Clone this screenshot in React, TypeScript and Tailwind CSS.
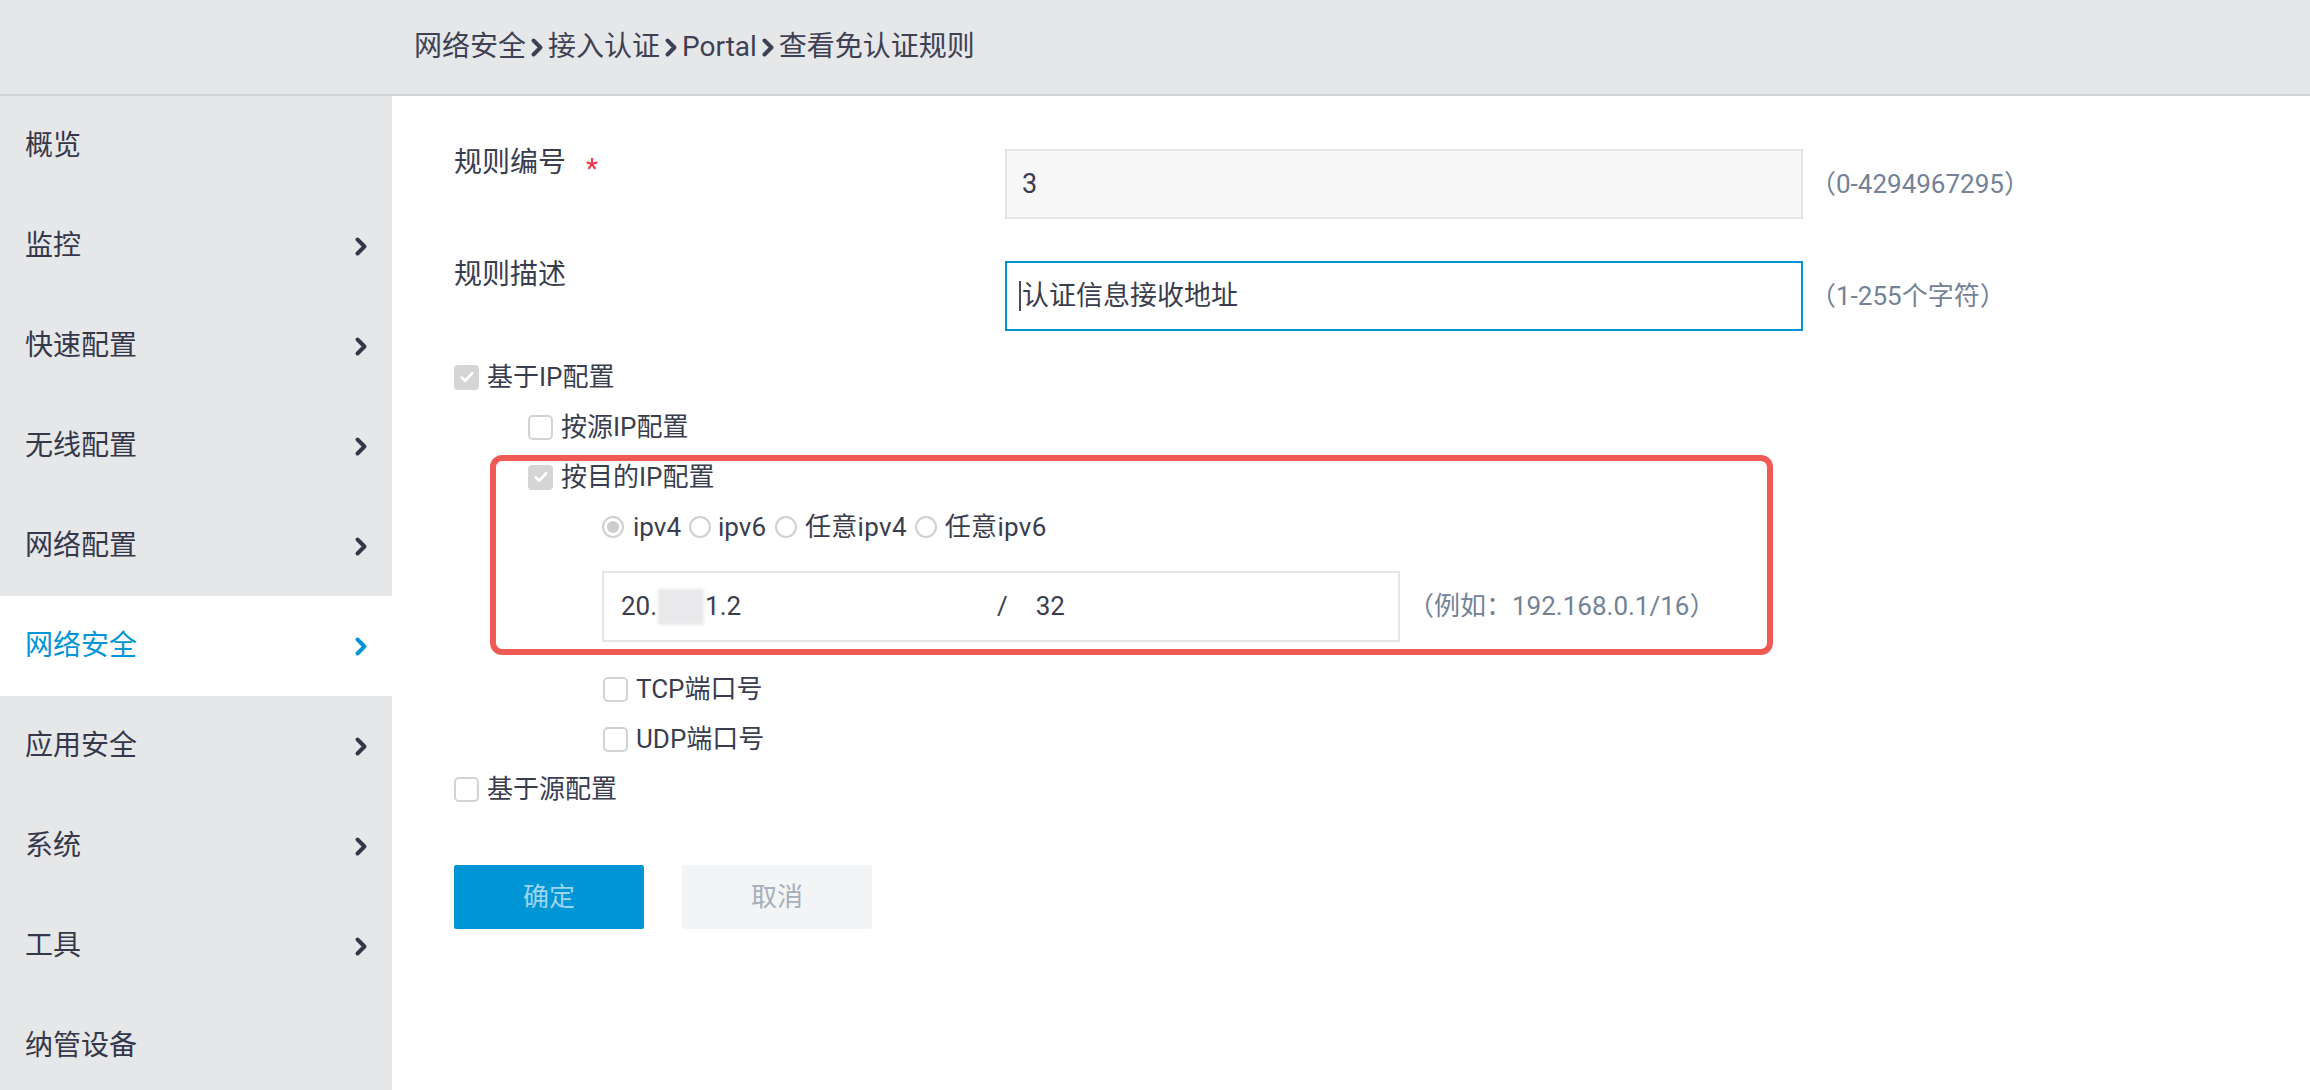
import React from "react";

const menu = [
  { name: "概览", arrow: false },
  { name: "监控", arrow: true },
  { name: "快速配置", arrow: true },
  { name: "无线配置", arrow: true },
  { name: "网络配置", arrow: true },
  { name: "网络安全", arrow: true, active: true },
  { name: "应用安全", arrow: true },
  { name: "系统", arrow: true },
  { name: "工具", arrow: true },
  { name: "纳管设备", arrow: false },
];

const Chevron = ({ className }: { className?: string }) => (
  <svg
    viewBox="0 0 14 21"
    className={className}
    fill="none"
    stroke="currentColor"
    strokeWidth={4}
    strokeLinecap="round"
    strokeLinejoin="round"
  >
    <path d="M3.5 3.5l7 7-7 7" />
  </svg>
);

const Checkbox = ({ checked }: { checked?: boolean }) =>
  checked ? (
    <span className="flex h-[25px] w-[25px] shrink-0 items-center justify-center rounded-[4px] bg-[#d5d5d5]">
      <svg viewBox="0 0 24 24" className="h-[18px] w-[18px]" fill="none" stroke="#ffffff" strokeWidth={3.5} strokeLinecap="round" strokeLinejoin="round">
        <path d="M5 12.5l4.5 4.5L19 7" />
      </svg>
    </span>
  ) : (
    <span className="h-[25px] w-[25px] shrink-0 rounded-[5px] border-2 border-[#d3d3d3] bg-white" />
  );

const Radio = ({ checked }: { checked?: boolean }) => (
  <span className="flex h-[22px] w-[22px] shrink-0 items-center justify-center rounded-full border-2 border-[#d0d0d0] bg-white">
    {checked && <span className="h-[12px] w-[12px] rounded-full bg-[#cdcdcd]" />}
  </span>
);

const CheckRow = ({ label, checked, indent }: { label: string; checked?: boolean; indent: string }) => (
  <div className={`flex h-[50px] items-center gap-[8px] ${indent}`}>
    <Checkbox checked={checked} />
    <span className="text-[26px]">{label}</span>
  </div>
);

export default function App() {
  return (
    <div className="flex h-[1090px] w-[2310px] flex-col overflow-hidden bg-white font-['Roboto','Noto_Sans_CJK_SC',sans-serif] text-[#3a3d4e]">
      {/* top breadcrumb bar */}
      <div className="flex h-[96px] shrink-0 items-center border-b-2 border-[#d3d4d6] bg-[#e6e7e9] pl-[414px] text-[28px] text-[#3e4154]">
        <span>网络安全</span>
        <Chevron className="mx-[4px] h-[21px] w-[14px]" />
        <span>接入认证</span>
        <Chevron className="mx-[4px] h-[21px] w-[14px]" />
        <span>Portal</span>
        <Chevron className="mx-[4px] h-[21px] w-[14px]" />
        <span>查看免认证规则</span>
      </div>

      <div className="flex flex-1">
        {/* side menu */}
        <div className="w-[392px] shrink-0 bg-[#e6e7e9]">
          {menu.map((item) => (
            <div
              key={item.name}
              className={
                item.active
                  ? "flex h-[100px] items-center justify-between bg-white pl-[25px] pr-[24px] text-[28px] text-[#0096d6]"
                  : "flex h-[100px] items-center justify-between pl-[25px] pr-[24px] text-[28px] text-[#35384a]"
              }
            >
              <span>{item.name}</span>
              {item.arrow && <Chevron className="h-[21px] w-[14px]" />}
            </div>
          ))}
        </div>

        {/* form */}
        <div className="flex-1 pl-[62px] pt-[53px]">
          <div className="flex items-start">
            <div className="flex w-[551px] items-start text-[28px] leading-[28px]">
              <span>规则编号</span>
              <span className="ml-[20px] mt-[6px] text-[#e8334a]">*</span>
            </div>
            <div className="flex items-center">
              <div className="flex h-[70px] w-[798px] items-center border-2 border-[#e3e5e7] bg-[#f7f7f7] pl-[15px] text-[27px]">3</div>
              <span className="ml-[7px] text-[26px] text-[#738296]">（0-4294967295）</span>
            </div>
          </div>

          <div className="mt-[42px] flex items-start">
            <div className="w-[551px] text-[28px] leading-[28px]">规则描述</div>
            <div className="flex items-center">
              <div className="flex h-[70px] w-[798px] items-center border-2 border-[#0096d6] bg-white pl-[12px] text-[27px]">
                <span className="mr-[1px] h-[30px] w-[2px] bg-[#4a4d5c]" />
                认证信息接收地址
              </div>
              <span className="ml-[7px] text-[26px] text-[#738296]">（1-255个字符）</span>
            </div>
          </div>

          <div className="relative mt-[21px]">
            <CheckRow label="基于IP配置" checked indent="ml-0" />
            <CheckRow label="按源IP配置" indent="ml-[74px]" />
            <CheckRow label="按目的IP配置" checked indent="ml-[74px]" />

            <div className="ml-[148px] flex h-[50px] items-center text-[26px]">
              <Radio checked />
              <span className="ml-[9px] mr-[8px]">ipv4</span>
              <Radio />
              <span className="ml-[7px] mr-[9px]">ipv6</span>
              <Radio />
              <span className="ml-[8px] mr-[8px] tracking-[0.3px]">任意ipv4</span>
              <Radio />
              <span className="ml-[8px] tracking-[0.3px]">任意ipv6</span>
            </div>

            <div className="ml-[148px] mt-[19px] flex items-center">
              <div className="flex h-[71px] w-[798px] items-center border-2 border-[#e4e5e8] bg-white pl-[17px] text-[26px]">
                <div className="flex w-[376px] items-center">
                  <span>20.</span>
                  <span className="mx-[1px] h-[36px] w-[46px] bg-[#e9e9eb] blur-[1.5px]" />
                  <span>1.2</span>
                </div>
                <span>/</span>
                <span className="ml-[28px]">32</span>
              </div>
              <span className="ml-[8px] text-[26px] text-[#738296]">（例如：192.168.0.1/16）</span>
            </div>

            <div className="mt-[22px]">
              <CheckRow label="TCP端口号" indent="ml-[149px]" />
              <CheckRow label="UDP端口号" indent="ml-[149px]" />
              <CheckRow label="基于源配置" indent="ml-0" />
            </div>

            {/* highlight annotation */}
            <div className="pointer-events-none absolute left-[36px] top-[103px] h-[200px] w-[1283px] rounded-[12px] border-[6px] border-[#ef5b54]" />
          </div>

          <div className="mt-[51px] flex gap-[38px]">
            <button className="h-[64px] w-[190px] rounded-[2px] bg-[#0096d6] text-[26px] text-[#9dd4ee]">确定</button>
            <button className="h-[64px] w-[190px] rounded-[2px] bg-[#f3f4f5] text-[26px] text-[#a6afba]">取消</button>
          </div>
        </div>
      </div>
    </div>
  );
}
